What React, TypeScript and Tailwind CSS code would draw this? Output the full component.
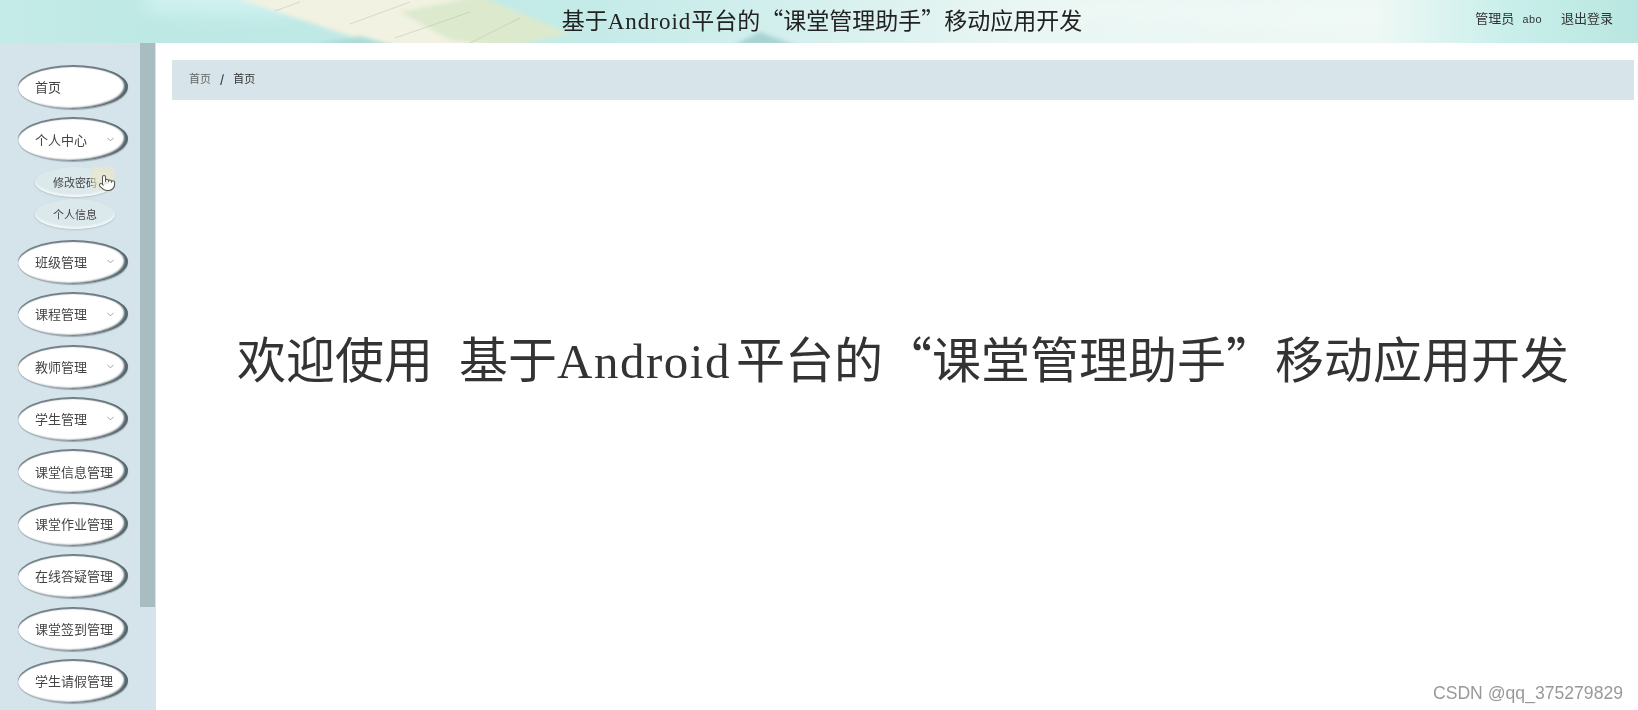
import { ChevronDown, Pointer } from 'lucide-react';

const cjk = { fontFamily: '"Noto Sans CJK SC", "Noto Sans", sans-serif' };

interface NavItem {
    label: string;
    arrow?: boolean;
    children?: string[];
}

const navItems: NavItem[] = [
    { label: '首页' },
    { label: '个人中心', arrow: true, children: ['修改密码', '个人信息'] },
    { label: '班级管理', arrow: true },
    { label: '课程管理', arrow: true },
    { label: '教师管理', arrow: true },
    { label: '学生管理', arrow: true },
    { label: '课堂信息管理' },
    { label: '课堂作业管理' },
    { label: '在线答疑管理' },
    { label: '课堂签到管理' },
    { label: '学生请假管理' },
];

const HeaderArt = () => (
    <svg className="absolute inset-0 w-full h-full" viewBox="0 0 1638 43" preserveAspectRatio="none">
        <defs>
            <linearGradient id="sky" x1="0" y1="0" x2="1" y2="0">
                <stop offset="0" stopColor="#c4ebe7" />
                <stop offset="0.1" stopColor="#bde8e4" />
                <stop offset="0.36" stopColor="#c4ebe8" />
                <stop offset="0.5" stopColor="#d6f0ee" />
                <stop offset="0.62" stopColor="#e9f6f3" />
                <stop offset="0.84" stopColor="#eef8f5" />
                <stop offset="0.92" stopColor="#c9efeb" />
                <stop offset="1" stopColor="#b9e6e0" />
            </linearGradient>
            <filter id="soft">
                <feGaussianBlur stdDeviation="2" />
            </filter>
            <filter id="wide" x="-30%" y="-100%" width="160%" height="300%">
                <feGaussianBlur stdDeviation="9" />
            </filter>
        </defs>
        <rect width="1638" height="43" fill="url(#sky)" />
        <polygon points="140,-10 330,-10 290,14 150,12" fill="#d2f3f3" filter="url(#wide)" />
        <polygon points="1050,6 1380,16 1380,22 1050,12" fill="#ffffff" opacity="0.5" filter="url(#wide)" />
        <g filter="url(#soft)">
            <polygon points="230,-4 479,-4 570,34 505,47 383,47" fill="#f2f2e2" />
            <polygon points="400,12 479,-4 570,34 505,47 450,40" fill="#dce9cd" />
            <polygon points="310,45 360,36 400,47" fill="#abdcd8" />
            <polygon points="730,47 760,32 800,47" fill="#a9d3d3" />
        </g>
        <g stroke="#b5c2a8" strokeWidth="1" fill="none" opacity="0.5">
            <path d="M275 11 L300 2" />
            <path d="M350 24 L410 2" />
            <path d="M395 38 L470 12" />
            <path d="M470 43 L520 18" />
        </g>
    </svg>
);

const MainItem = ({ item }: { item: NavItem }) => (
    <div className="flex items-center justify-between w-[110px] h-11 pl-[17px] pr-3 rounded-[50%] bg-white text-[13px] text-[#444] shadow-[inset_-4px_-1px_2px_#56666d,inset_0_2px_1px_#6d7d83,0_1px_1px_#93a5ab]">
        <span className="whitespace-nowrap">{item.label}</span>
        {item.arrow && <ChevronDown size={11} className="text-[#999] shrink-0" />}
    </div>
);

const SubItem = ({ label }: { label: string }) => (
    <div className="flex items-center justify-center w-20 h-[30px] rounded-[50%] bg-[#dbe8ec] text-[11px] text-[#444] shadow-[inset_0_-2px_2px_#f4f8f9,0_1px_2px_#b4c3c8]">
        {label}
    </div>
);

const Sidebar = () => (
    <aside className="relative flex w-[156px] h-full bg-[#d5e4ea] overflow-hidden">
        <nav className="w-[140px] pt-[22px] pl-[18px] flex flex-col gap-[8.4px]">
            {navItems.map((item) => (
                <div key={item.label} className="flex flex-col">
                    <MainItem item={item} />
                    {item.children && (
                        <div className="flex flex-col gap-[2px] pl-[17px] mt-[6px] mb-[2px]">
                            {item.children.map((child) => (
                                <SubItem key={child} label={child} />
                            ))}
                        </div>
                    )}
                </div>
            ))}
        </nav>
        <div className="w-[15px] h-[564px] bg-[#a9bcc0]" />

        {/* Hand cursor over the first submenu entry */}
        <div className="absolute left-[92px] top-[124px] w-[22px] h-[22px] bg-[#efe8c4]/60 blur-[1px]" />
        <Pointer size={18} strokeWidth={1.4} className="absolute left-[98px] top-[131px] text-[#555] fill-white" />
    </aside>
);

const App = () => {
    return (
        <div className="relative w-[1638px] h-[710px] bg-white overflow-hidden flex flex-col blur-[0.4px]" style={cjk}>
            <header className="relative h-[43px] shrink-0 grid grid-cols-[1fr_auto_1fr] items-center">
                <HeaderArt />
                <div />
                <h1 className="relative ml-[6px] mb-[3px] text-[23px] leading-none font-normal text-[#222] whitespace-nowrap">
                    基于<span className="font-['Liberation_Serif'] tracking-[1px]">Android</span>平台的“课堂管理助手”移动应用开发
                </h1>
                <div className="relative flex justify-end items-center gap-[19px] pr-[25px] pb-[7px] text-[13px] text-[#333]">
                    <span className="flex items-baseline gap-[8px]">
                        <span>管理员</span>
                        <span className="font-['Liberation_Mono'] text-[11px]">abo</span>
                    </span>
                    <span>退出登录</span>
                </div>
            </header>

            <div className="flex flex-1 min-h-0">
                <Sidebar />
                <main className="flex-1 flex flex-col pt-[17px] pl-4 pr-1">
                    <div className="flex items-center gap-[9px] h-10 pl-[17px] pb-[3px] bg-[#d7e5ea] text-[11px] text-[#666] shrink-0">
                        <span>首页</span>
                        <span className="font-bold text-[#333]">/</span>
                        <span className="text-[#333]">首页</span>
                    </div>
                    <div className="flex justify-center pt-[222px]">
                        <h2 className="text-[49px] leading-[70px] font-normal text-[#333] whitespace-nowrap">
                            <span className="mr-[15px]">欢迎使用</span> 基于<span className="font-['Liberation_Serif'] tracking-[1.5px] mr-[5px]">Android</span>平台的“课堂管理助手”移动应用开发
                        </h2>
                    </div>
                </main>
            </div>

            <span className="absolute right-[15px] top-[683px] text-[17.6px] leading-5 text-[#999] font-['Liberation_Sans']">
                CSDN @qq_375279829
            </span>
        </div>
    );
};

export default App;
